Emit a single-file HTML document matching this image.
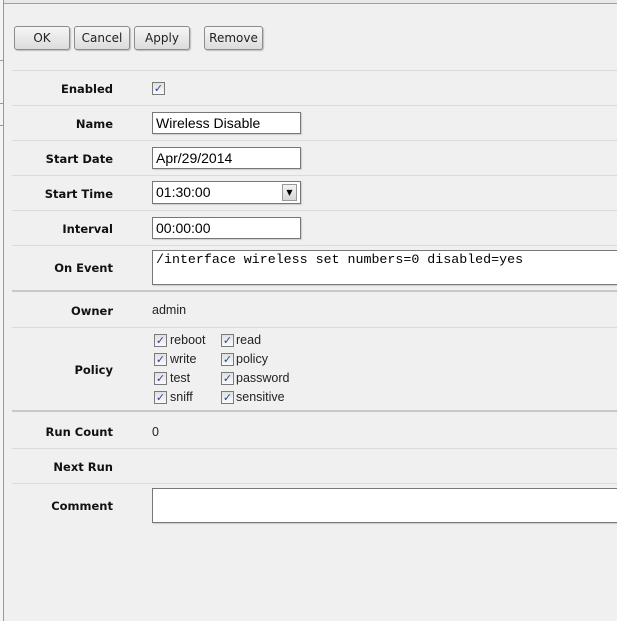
<!DOCTYPE html>
<html><head><meta charset="utf-8"><style>
*{margin:0;padding:0;box-sizing:border-box}
body{width:617px;height:621px;background:#f0f0f0;position:relative;overflow:hidden;font-family:"DejaVu Sans","Liberation Sans",sans-serif;font-size:11px;color:#222}
.a{position:absolute}
.top{left:0;top:0;width:617px;height:4px;background:#e8e8e8;border-bottom:1px solid #a0a0a0}
.left{left:0;top:0;width:4px;height:621px;background:#f4f4f4;border-right:1px solid #9a9a9a}
.btn{height:24px;top:26px;border:1px solid #8c8c8c;border-radius:3px;background:linear-gradient(#f6f6f6,#dcdcdc);font-size:12px;text-align:center;line-height:22px;color:#222;box-shadow:1px 1px 1px #bbb}
.sep{left:12px;width:605px;height:1px;background:#dadada}
.sep2{left:12px;width:605px;height:2px;background:#c8c8c8}
.lbl{width:113px;left:0;text-align:right;font-weight:bold;font-size:11.5px;color:#111}
.inp{left:152px;width:149px;height:22px;background:#fff;border:1px solid #777;font-family:"Liberation Sans",sans-serif;font-size:14px;line-height:20px;padding-left:3px;color:#000;box-shadow:1px 1px 1px #ccc}
.cb{width:13px;height:13px;border:1px solid #7a7a7a;background:linear-gradient(#e0e0e0,#fafafa);font-size:11px;line-height:11px;text-align:center;color:#28449a;font-weight:bold}
.cl{font-size:12.5px;color:#222;font-family:"Liberation Sans",sans-serif}
</style></head><body>
<div class="a top"></div>
<div class="a left"></div>
<div class="a" style="left:0;top:60px;width:4px;height:1px;background:#999"></div>
<div class="a" style="left:0;top:103px;width:4px;height:1px;background:#999"></div>
<div class="a" style="left:0;top:125px;width:4px;height:1px;background:#999"></div>

<div class="a btn" style="left:14px;width:56px">OK</div>
<div class="a btn" style="left:74px;width:56px">Cancel</div>
<div class="a btn" style="left:134px;width:56px">Apply</div>
<div class="a btn" style="left:204px;width:59px">Remove</div>

<div class="a sep" style="top:70px"></div>
<div class="a lbl" style="top:82px">Enabled</div>
<div class="a cb" style="left:152px;top:82px">✓</div>
<div class="a sep" style="top:105px"></div>
<div class="a lbl" style="top:117px">Name</div>
<div class="a inp" style="top:112px">Wireless Disable</div>
<div class="a sep" style="top:140px"></div>
<div class="a lbl" style="top:152px">Start Date</div>
<div class="a inp" style="top:147px">Apr/29/2014</div>
<div class="a sep" style="top:175px"></div>
<div class="a lbl" style="top:187px">Start Time</div>
<div class="a inp" style="top:181px;height:23px">01:30:00</div>
<div class="a" style="left:282px;top:184px;width:15px;height:17px;border:1px solid #999;background:linear-gradient(#f4f4f4,#d8d8d8);font-size:8px;text-align:center;line-height:16px;color:#000">▼</div>
<div class="a sep" style="top:210px"></div>
<div class="a lbl" style="top:222px">Interval</div>
<div class="a inp" style="top:217px">00:00:00</div>
<div class="a sep" style="top:245px"></div>
<div class="a lbl" style="top:261px">On Event</div>
<div class="a inp" style="top:250px;width:470px;height:35px;font-family:'Liberation Mono',monospace;font-size:13.3px;line-height:18px;padding-top:0">/interface wireless set numbers=0 disabled=yes</div>
<div class="a sep2" style="top:290px"></div>
<div class="a lbl" style="top:304px">Owner</div>
<div class="a cl" style="left:152px;top:303px">admin</div>
<div class="a sep" style="top:327px"></div>
<div class="a lbl" style="top:363px">Policy</div>

<div class="a cb" style="left:154px;top:334px">✓</div><div class="a cl" style="left:170px;top:333px">reboot</div>
<div class="a cb" style="left:221px;top:334px">✓</div><div class="a cl" style="left:236px;top:333px">read</div>
<div class="a cb" style="left:154px;top:353px">✓</div><div class="a cl" style="left:170px;top:352px">write</div>
<div class="a cb" style="left:221px;top:353px">✓</div><div class="a cl" style="left:236px;top:352px">policy</div>
<div class="a cb" style="left:154px;top:372px">✓</div><div class="a cl" style="left:170px;top:371px">test</div>
<div class="a cb" style="left:221px;top:372px">✓</div><div class="a cl" style="left:236px;top:371px">password</div>
<div class="a cb" style="left:154px;top:391px">✓</div><div class="a cl" style="left:170px;top:390px">sniff</div>
<div class="a cb" style="left:221px;top:391px">✓</div><div class="a cl" style="left:236px;top:390px">sensitive</div>

<div class="a sep2" style="top:410px"></div>
<div class="a lbl" style="top:425px">Run Count</div>
<div class="a cl" style="left:152px;top:425px">0</div>
<div class="a sep" style="top:448px"></div>
<div class="a lbl" style="top:460px">Next Run</div>
<div class="a sep" style="top:483px"></div>
<div class="a lbl" style="top:499px">Comment</div>
<div class="a inp" style="top:488px;width:470px;height:35px"></div>
</body></html>
